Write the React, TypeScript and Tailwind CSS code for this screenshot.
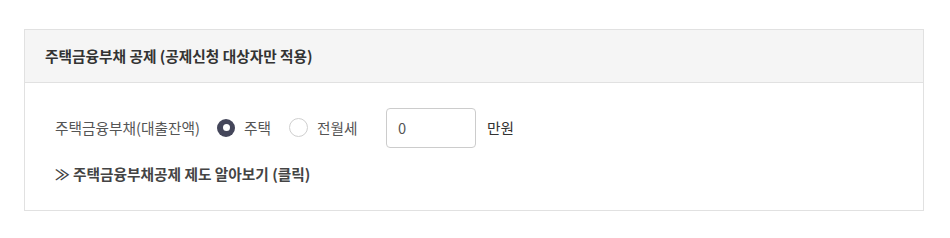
import React from "react";

export default function App() {
  return (
    <div className="w-[950px] h-[238px] bg-white pt-[29px] pl-[24px]" style={{ fontFamily: '"Noto Sans CJK KR", "Noto Sans", sans-serif' }}>
      <div className="w-[900px] border border-[#e1e1e1]">
        <div className="h-[53px] bg-[#f5f5f5] border-b border-[#e1e1e1] flex items-center pl-[20px] text-[14.7px] font-bold text-[#333]">
          주택금융부채 공제 (공제신청 대상자만 적용)
        </div>
        <div className="h-[127px] pl-[30px] pt-[25px]">
          <div className="flex items-center h-[40px]">
            <span className="text-[14.7px] text-[#555] w-[162px] shrink-0">주택금융부채(대출잔액)</span>
            <label className="flex items-center w-[72px] shrink-0">
              <span className="w-[18px] h-[18px] rounded-full bg-[#44465a] flex items-center justify-center">
                <span className="w-[7px] h-[7px] rounded-full bg-white" />
              </span>
              <span className="ml-[9px] text-[14.7px] text-[#555]">주택</span>
            </label>
            <label className="flex items-center w-[97px] shrink-0">
              <span className="w-[19px] h-[19px] rounded-full border border-[#cfcfcf] bg-white" />
              <span className="ml-[9px] text-[14.7px] text-[#555]">전월세</span>
            </label>
            <div className="w-[90px] h-[40px] shrink-0 border border-[#cccccc] rounded-[4px] flex items-center pl-[11px] text-[14.7px] text-[#555]">
              0
            </div>
            <span className="ml-[11px] text-[14.7px] text-[#333]">만원</span>
          </div>
          <div className="mt-[15px] text-[14.7px] font-bold text-[#444]">≫ 주택금융부채공제 제도 알아보기 (클릭)</div>
        </div>
      </div>
    </div>
  );
}
